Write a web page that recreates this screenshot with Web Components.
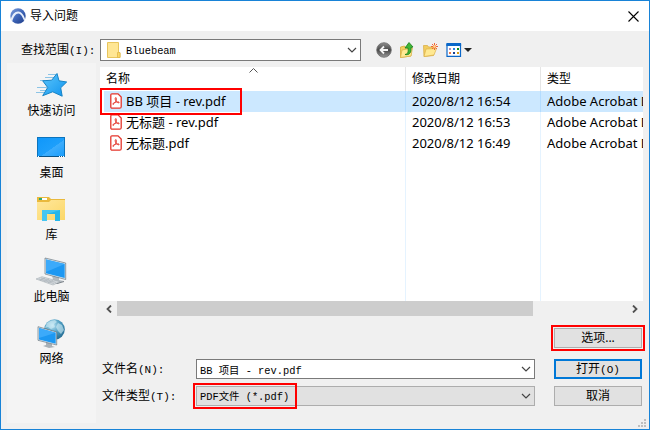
<!DOCTYPE html>
<html lang="zh-CN">
<head>
<meta charset="utf-8">
<title>导入问题</title>
<style>
    body {
        margin: 0;
        font: 12px/16px "Noto Sans", "Noto Sans CJK SC", sans-serif;
        color: #000;
    }
</style>
</head>
<body>
<dialog-window>
    <span slot="title">导入问题</span>
    <look-in-bar slot="toolbar"></look-in-bar>
    <places-bar slot="places">
        <place-item icon="quick">快速访问</place-item>
        <place-item icon="desktop">桌面</place-item>
        <place-item icon="library">库</place-item>
        <place-item icon="computer">此电脑</place-item>
        <place-item icon="network">网络</place-item>
    </places-bar>
    <file-list></file-list>
    <file-form></file-form>
</dialog-window>

<script>
// Classic fixed width dialog text: latin takes about half of the em
const monoStyle = `
    .mono {
        font-family: "Liberation Mono", "Noto Sans CJK SC", monospace;
        font-size: 12px;
        line-height: 16px;
        font-size-adjust: ch-width 0.52;
    }
    label { font-family: "Noto Sans CJK SC", sans-serif; white-space: nowrap; }
    label span { font-family: "Liberation Mono", monospace; font-size: 11px; }
`;

const chevron = `
    <svg class="chevron" width="10" height="6" viewBox="0 0 10 6" aria-hidden="true">
        <path d="M1 1l4 4 4-4" fill="none" stroke="#444" stroke-width="1.2"/>
    </svg>
`;

const placeIcons = {
    quick: `
        <defs><linearGradient id="g" x1="0" y1="0" x2="1" y2="1">
            <stop offset="0" stop-color="#5cc6fb"/><stop offset="1" stop-color="#0f93ee"/>
        </linearGradient></defs>
        <path d="M12 4.500h8M9 7.500h9M4 10.500h5M1 17.500h10M4 20.500h6M0 22.500h8" stroke="#8cc4e6" stroke-width="1"/>
        <path d="M21 3.500l2 7.300 7.700 1.200-6 5.800 1.500 8.400-9.500-4.400-10 3.900 5-8.200-5-6.700 9-.6z" fill="url(#g)" stroke="#1583c6" stroke-width="1"/>`,
    desktop: `
        <defs><linearGradient id="g" x1="0" y1="0" x2="1" y2="1">
            <stop offset="0" stop-color="#0f97fa"/><stop offset=".55" stop-color="#1d9ffb"/>
            <stop offset=".56" stop-color="#3dadfd"/><stop offset="1" stop-color="#1a9dfb"/>
        </linearGradient></defs>
        <rect x="1.500" y="5.500" width="27" height="19" fill="url(#g)" stroke="#0b74bd"/>
        <path d="M2 24.500h26" stroke="#0a5285"/>
        <path d="M2 24.500h1M23 24.500h1M25 24.500h1M27 24.500h1" stroke="#fff"/>`,
    library: `
        <defs><linearGradient id="g" x1="0" y1="0" x2="1" y2="1">
            <stop offset="0" stop-color="#ffe79c"/><stop offset="1" stop-color="#fbd767"/>
        </linearGradient></defs>
        <path d="M1 3h12l2 2h14v4H1z" fill="#e9b93c"/>
        <path d="M3 4h3v2H3z" fill="#2ba874"/><path d="M6 4h5v2H6z" fill="#fff"/>
        <path d="M1 8h12l2-2h14v20H1z" fill="url(#g)"/>
        <path d="M6 16h18v11h-5v-7h-8v7H6z" fill="#23b6ea"/>
        <path d="M6 16h18L11 20v7H6z" fill="#45c6f1"/>`,
    computer: `
        <path d="M16 19l7 2v3l5 1-7 3-7-3 3-1z" fill="#b4bbc1"/>
        <path d="M14 25l7 2 7-2v1l-7 2-7-2z" fill="#777f86"/>
        <path d="M9 2l20.700 5v16.500L9 18z" fill="#dbe7ef" stroke="#56646e" stroke-width=".6"/>
        <path d="M10 3.400l18.700 4.500V22L10 17.200z" fill="#1d98f2"/>
        <path d="M10 3.400l18.700 4.500L10 16z" fill="#3caafa"/>
        <path d="M0 23l6-2.300 18 5-7 3.300z" fill="#d5dade" stroke="#a4acb2" stroke-width=".6"/>
        <path d="M3 23l15 4.500M5 22l15 4.500M4 24.500l5-2.500M8 25.600l5-2.400M12 26.700l5-2.400" stroke="#a4adb4" stroke-width=".6"/>`,
    network: `
        <defs><radialGradient id="g" cx=".4" cy=".3" r=".8">
            <stop offset="0" stop-color="#b8e2f3"/><stop offset=".5" stop-color="#4d9cc0"/><stop offset="1" stop-color="#1a5f86"/>
        </radialGradient></defs>
        <circle cx="18.500" cy="11.500" r="10.300" fill="url(#g)"/>
        <path d="M11 5q4-3 8-3l2 2-3 2 1 3-4 2-3-2-3 1zM22 5l4 2 2 5-3 4-3-3-2-4z" fill="#d3eef7" opacity=".6"/>
        <path d="M10 24l6 2v2l3 1-6 1-6-2 3-1z" fill="#a8b0b6"/>
        <path d="M2 8.700L20.700 14v13L2 22.300z" fill="#dbe7ef" stroke="#56646e" stroke-width=".6"/>
        <path d="M3 10l16.700 4.800v11L3 21.500z" fill="#1d98f2"/>
        <path d="M3 10l16.700 4.800L3 20z" fill="#3caafa"/>`
};

class DialogWindow extends HTMLElement {
    constructor() {
        super();
        this.attachShadow({ mode: 'open' });
    }

    connectedCallback() {
        this.shadowRoot.innerHTML = `
            <style>
                :host {
                    display: flex;
                    flex-direction: column;
                    box-sizing: border-box;
                    min-height: 100vh;
                    position: relative;
                    border: 1px solid #1883d7;
                    background: #f0f0f0;
                }
                header {
                    display: flex;
                    align-items: center;
                    gap: 4px;
                    height: 30px;
                    padding: 0 8px 0 9px;
                    background: #fff;
                }
                h1 { flex: 1; margin: 0; font: inherit; }
                button { display: flex; padding: 2px; border: 0; background: none; }
                .body { flex: 1; display: flex; }
                main {
                    flex: 1;
                    min-width: 0;
                    display: flex;
                    flex-direction: column;
                    padding: 4px 6px 23px 4px;
                }
                .grip { position: absolute; right: 3px; bottom: 2px; }
            </style>
            <header>
                <svg width="16" height="16" viewBox="0 0 16 16" aria-hidden="true">
                    <defs><linearGradient id="ball" x1="0" y1="0" x2="1" y2="1">
                        <stop offset="0" stop-color="#7f9fdc"/><stop offset=".5" stop-color="#3f66b8"/><stop offset="1" stop-color="#1c3a86"/>
                    </linearGradient></defs>
                    <circle cx="8" cy="8" r="7.700" fill="url(#ball)"/>
                    <path d="M.7 11.500C2 6 5.500 3 8.500 3.500s5.500 3.500 6.700 7.700l-1 1.800C12.500 9 11 5.700 8.500 5.500S3.500 8.500 2.200 13.500z" fill="#e6eefb"/>
                </svg>
                <h1><slot name="title"></slot></h1>
                <button type="button" aria-label="关闭">
                    <svg width="11" height="11" viewBox="0 0 11 11"><path d="M.5.5l10 10M10.500.5l-10 10" stroke="#000" stroke-width="1.100"/></svg>
                </button>
            </header>
            <slot name="toolbar"></slot>
            <div class="body">
                <slot name="places"></slot>
                <main><slot></slot></main>
            </div>
            <svg class="grip" width="8" height="8" viewBox="0 0 8 8" aria-hidden="true">
                <path d="M6 0h2v2H6zM3 3h2v2H3zM6 3h2v2H6zM0 6h2v2H0zM3 6h2v2H3zM6 6h2v2H6z" fill="#bfbfbf"/>
            </svg>
        `;
    }
}

class LookInBar extends HTMLElement {
    constructor() {
        super();
        this.attachShadow({ mode: 'open' });
    }

    connectedCallback() {
        this.shadowRoot.innerHTML = `
            <style>
                ${monoStyle}
                :host {
                    display: flex;
                    align-items: center;
                    padding: 8px 6px 2px 20px;
                }
                label { width: 79px; }
                .combo {
                    display: grid;
                    align-items: center;
                    flex: 0 1 259px;
                    height: 20px;
                    border: 1px solid #7a7a7a;
                    background: #fff;
                }
                .combo > * { grid-area: 1 / 1; }
                .combo svg { pointer-events: none; z-index: 1; }
                .folder { margin-left: 6px; }
                .chevron { justify-self: end; margin-right: 3px; }
                select {
                    appearance: none;
                    box-sizing: border-box;
                    width: 100%;
                    height: 20px;
                    padding: 2px 20px 0 25px;
                    border: 0;
                    background: none;
                    color: #000;
                }
                nav { display: flex; align-items: center; gap: 7px; margin-left: 15px; }
                button { display: flex; align-items: center; gap: 2px; padding: 0; border: 0; background: none; }
            </style>
            <label for="folder">查找范围<span>(I):</span></label>
            <div class="combo">
                <svg class="folder" width="14" height="16" viewBox="0 0 14 16" aria-hidden="true">
                    <path d="M.5.5h11V10l1.500 1v4.500H.5z" fill="#ffe694" stroke="#e8c55d"/>
                    <path d="M10.500 10.500h2.500v5h-2.500z" fill="#fbd767" stroke="#dfb84a" stroke-width=".8"/>
                </svg>
                <select id="folder" class="mono"><option>Bluebeam</option></select>
                ${chevron}
            </div>
            <nav>
                <button type="button" aria-label="后退">
                    <svg width="16" height="16" viewBox="0 0 16 16">
                        <defs><linearGradient id="ball" x1="0" y1="0" x2="0" y2="1">
                            <stop offset="0" stop-color="#8f8f8f"/><stop offset=".5" stop-color="#484848"/><stop offset="1" stop-color="#9a9a9a"/>
                        </linearGradient></defs>
                        <circle cx="8" cy="8" r="7.300" fill="url(#ball)" stroke="#6c6c6c" stroke-width=".8"/>
                        <path d="M8 4.500L4.500 8 8 11.500M5 8h7" fill="none" stroke="#f4f4f4" stroke-width="1.800"/>
                    </svg>
                </button>
                <button type="button" aria-label="向上一级">
                    <svg width="16" height="16" viewBox="0 0 16 16">
                        <path d="M1.500 5l4-1 1 1.500L12 5v9l-10.500 1.500z" fill="#f3cf5f" stroke="#d5ab3a" stroke-width=".8"/>
                        <path d="M3 8l10.500-2L12 14 1.500 15.500z" fill="#ffe993" stroke="#d9b04a" stroke-width=".7"/>
                        <path d="M6 12.500c3-.5 3.500-2.500 3-6.500H6L10 .5 14 5l-2 .5c.5 5-1.500 8-6 7z" fill="#3fb735" stroke="#1b7d1a" stroke-width=".8"/>
                    </svg>
                </button>
                <button type="button" aria-label="新建文件夹">
                    <svg width="16" height="16" viewBox="0 0 16 16">
                        <path d="M1.500 3.500h4l1 1.500h5v8.500L2 14.500z" fill="#f2cd5f" stroke="#dbb04a" stroke-width=".8"/>
                        <path d="M4 7l10.500-.5L12 13 2 14.500z" fill="#ffe992" stroke="#dbb04a" stroke-width=".7"/>
                        <path d="M12.500 1v7M9 4.500h7M10 2l5 5M15 2l-5 5" stroke="#f0643a" stroke-width="1"/>
                        <circle cx="12.500" cy="4.500" r="1.400" fill="#ffd28c"/>
                    </svg>
                </button>
                <button type="button" aria-label="查看菜单">
                    <svg width="17" height="16" viewBox="0 0 17 16">
                        <path d="M2 2.500h13.500v11.800H2z" fill="#fff" stroke="#0a67c9" stroke-width="1.200"/>
                        <path d="M1.400 1h14.700v3H1.400z" fill="#0a67c9"/>
                        <path d="M4 6h2v2H4z" fill="#a58fc0"/><path d="M8 6h2v2H8z" fill="#2a82e4"/><path d="M12 6h2v2h-2z" fill="#0e8a1c"/>
                        <path d="M4 10h2v2H4z" fill="#f0794c"/><path d="M8 10h2v2H8z" fill="#173f94"/><path d="M12 10h2v2h-2z" fill="#d79b14"/>
                    </svg>
                    <svg width="8" height="4" viewBox="0 0 8 4"><path d="M0 0h8L4 4z" fill="#222"/></svg>
                </button>
            </nav>
        `;
    }
}

class PlacesBar extends HTMLElement {
    constructor() {
        super();
        this.attachShadow({ mode: 'open' });
    }

    connectedCallback() {
        this.shadowRoot.innerHTML = `
            <style>
                :host {
                    display: flex;
                    flex-direction: column;
                    gap: 13px;
                    width: 89px;
                    box-sizing: border-box;
                    margin: 0 0 6px 6px;
                    padding-top: 7px;
                    background: #f4f4f4;
                }
            </style>
            <slot></slot>
        `;
    }
}

class PlaceItem extends HTMLElement {
    constructor() {
        super();
        this.attachShadow({ mode: 'open' });
    }

    connectedCallback() {
        const icon = placeIcons[this.getAttribute('icon')];

        this.shadowRoot.innerHTML = `
            <style>
                :host { display: block; }
                button {
                    display: flex;
                    flex-direction: column;
                    align-items: center;
                    gap: 1px;
                    width: 100%;
                    padding: 0;
                    border: 0;
                    background: none;
                    font: inherit;
                    color: inherit;
                }
            </style>
            <button type="button">
                <svg width="31" height="32" viewBox="0 0 31 32" aria-hidden="true">${icon}</svg>
                <span><slot></slot></span>
            </button>
        `;
    }
}

class FileList extends HTMLElement {
    constructor() {
        super();
        this.attachShadow({ mode: 'open' });
        this.files = [
            { name: 'BB 项目 - rev.pdf', date: '2020/8/12 16:54', selected: true },
            { name: '无标题 - rev.pdf', date: '2020/8/12 16:53' },
            { name: '无标题.pdf', date: '2020/8/12 16:49' }
        ];
    }

    row(file) {
        return `
            <tr class="${file.selected ? 'selected' : ''}">
                <td>
                    <div class="name">
                        <svg width="12" height="16" viewBox="0 0 12 16" aria-hidden="true">
                            <path d="M2 .8h6l3.200 3.200v9.700q0 1.500-1.500 1.500H2.200Q.8 15.200.8 13.700V2.200Q.8.8 2 .8z" fill="#fff" stroke="#e5352b" stroke-width="1.300"/>
                            <path d="M6 4.500c1 2 0 4.500-3 7-.8-1.200 2-2.800 6-2.500.8 1.500-2 1-3.500-2C5 6 5 4.800 6 4.500z" fill="none" stroke="#e5352b"/>
                        </svg>
                        <span>${file.name}</span>
                    </div>
                    ${file.selected ? '<div class="mark"></div>' : ''}
                </td>
                <td>${file.date}</td>
                <td>Adobe Acrobat D</td>
            </tr>
        `;
    }

    connectedCallback() {
        this.shadowRoot.innerHTML = `
            <style>
                :host { flex: 1; display: flex; flex-direction: column; }
                .view { flex: 1; display: flex; overflow: hidden; padding-left: 4px; background: #fff; }
                table { flex: none; width: 620px; table-layout: fixed; border-spacing: 0; font-size: 13px; }
                col.name-col { width: 301px; }
                col.date-col { width: 135px; }
                th, td {
                    box-sizing: border-box;
                    position: relative;
                    padding: 0 0 0 6px;
                    text-align: left;
                    font-weight: normal;
                    white-space: nowrap;
                    border-left: 1px solid #e5f3ff;
                }
                th { height: 24px; font-size: 12px; border-color: #e5e5e5; }
                td { height: 21px; padding-bottom: 2px; }
                th:first-child { padding-left: 2px; border: 0; }
                td:first-child { border: 0; }
                .selected td { background: #cce8ff; border-color: #b3dcff; }
                .rest td { height: auto; }
                .sort { position: absolute; top: 1px; left: 145px; }
                .name { display: flex; align-items: center; gap: 4px; }
                .mark {
                    position: absolute;
                    top: -3px;
                    left: -4px;
                    z-index: 1;
                    width: 138px;
                    height: 23px;
                    border: 2px solid #f00;
                }
                .scroll { display: flex; height: 15px; }
                .scroll button {
                    display: flex;
                    align-items: center;
                    justify-content: center;
                    width: 17px;
                    padding: 0;
                    border: 0;
                    background: none;
                }
                .track { flex: 1; display: flex; }
                .thumb { flex: 9; background: #cdcdcd; }
                .space { flex: 2; }
            </style>
            <div class="view">
                <table>
                    <colgroup><col class="name-col"><col class="date-col"><col></colgroup>
                    <thead>
                        <tr>
                            <th>名称
                                <svg class="sort" width="9" height="5" viewBox="0 0 9 5" aria-hidden="true"><path d="M.5 4.500l4-4 4 4" fill="none" stroke="#555"/></svg>
                            </th>
                            <th>修改日期</th>
                            <th>类型</th>
                        </tr>
                    </thead>
                    <tbody>
                        ${this.files.map(file => this.row(file)).join('')}
                        <tr class="rest"><td></td><td></td><td></td></tr>
                    </tbody>
                </table>
            </div>
            <div class="scroll">
                <button type="button" aria-label="向左滚动">
                    <svg width="6" height="8" viewBox="0 0 6 8"><path d="M5 .5L1.500 4 5 7.500" fill="none" stroke="#505050" stroke-width="1.800"/></svg>
                </button>
                <div class="track"><div class="thumb"></div><div class="space"></div></div>
                <button type="button" aria-label="向右滚动">
                    <svg width="6" height="8" viewBox="0 0 6 8"><path d="M1 .5L4.500 4 1 7.500" fill="none" stroke="#505050" stroke-width="1.800"/></svg>
                </button>
            </div>
        `;
    }
}

class FileForm extends HTMLElement {
    constructor() {
        super();
        this.attachShadow({ mode: 'open' });
    }

    connectedCallback() {
        this.shadowRoot.innerHTML = `
            <style>
                ${monoStyle}
                :host { display: block; padding: 12px 1px 0 2px; }
                form {
                    display: grid;
                    grid-template-columns: 94px 1fr 88px;
                    align-items: center;
                }
                .options { grid-column: 3; margin-bottom: 11px; }
                .combo { display: grid; align-items: center; position: relative; margin-right: 19px; }
                .combo > * { grid-area: 1 / 1; }
                .chevron { justify-self: end; margin-right: 4px; z-index: 1; pointer-events: none; }
                input, select {
                    appearance: none;
                    box-sizing: border-box;
                    width: 100%;
                    height: 20px;
                    padding: 0 20px 0 3px;
                    border: 1px solid #7a7a7a;
                    border-radius: 0;
                    background: #fff;
                    color: #000;
                }
                select { padding-top: 2px; border-color: #adadad; background: #e1e1e1; }
                .type { margin-top: 7px; }
                .combo .mark {
                    position: absolute;
                    top: -3px;
                    left: -3px;
                    width: 100px;
                    height: 22px;
                    border: 2px solid #f00;
                    pointer-events: none;
                }
                button {
                    height: 20px;
                    padding: 0;
                    border: 1px solid #adadad;
                    background: #e1e1e1;
                    font: inherit;
                    line-height: 16px;
                    color: #000;
                }
                button span { font-family: "Liberation Mono", monospace; font-size: 11px; }
                .options { outline: 2px solid #f00; outline-offset: 1px; }
                .open { border: 2px solid #0078d7; }
            </style>
            <form>
                <button type="button" class="options">选项...</button>
                <label for="name">文件名<span>(N):</span></label>
                <div class="combo">
                    <input id="name" class="mono" type="text" value="BB 项目 - rev.pdf">
                    ${chevron}
                </div>
                <button type="button" class="open">打开<span>(O)</span></button>
                <label for="type" class="type">文件类型<span>(T):</span></label>
                <div class="combo type">
                    <select id="type" class="mono"><option>PDF文件 (*.pdf)</option></select>
                    ${chevron}
                    <div class="mark"></div>
                </div>
                <button type="button" class="type">取消</button>
            </form>
        `;
    }
}

customElements.define('dialog-window', DialogWindow);
customElements.define('look-in-bar', LookInBar);
customElements.define('places-bar', PlacesBar);
customElements.define('place-item', PlaceItem);
customElements.define('file-list', FileList);
customElements.define('file-form', FileForm);
</script>
</body>
</html>
